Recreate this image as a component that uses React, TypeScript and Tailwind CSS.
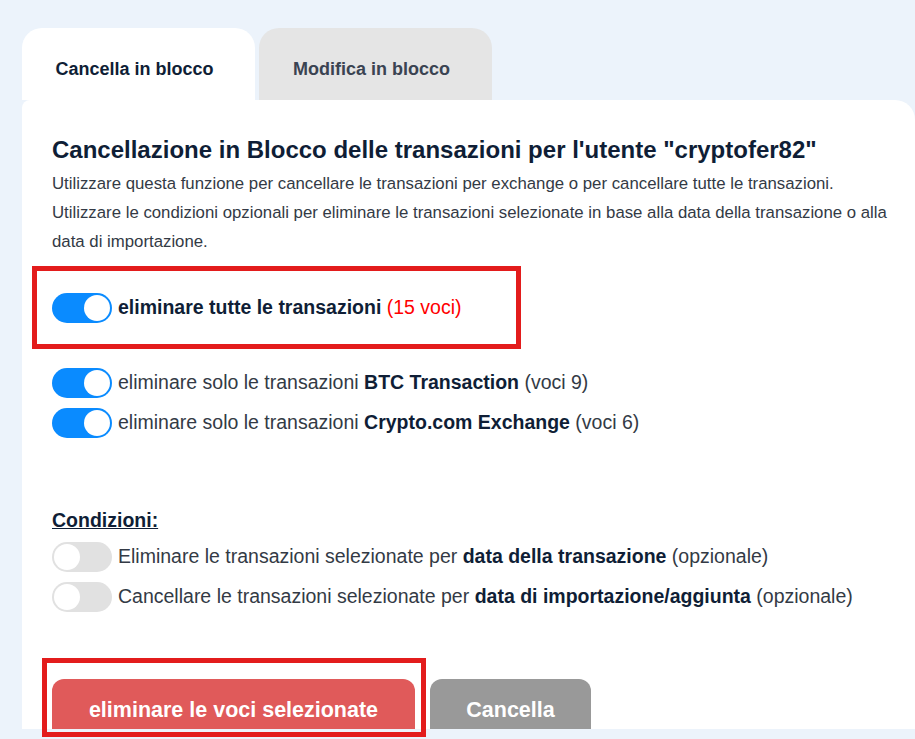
import React from "react"

function Toggle({ on }: { on: boolean }) {
  return (
    <span
      className={
        on
          ? "flex h-[30px] w-[60px] shrink-0 items-center justify-end rounded-full bg-[#0a8bff] p-[2px]"
          : "flex h-[30px] w-[60px] shrink-0 items-center justify-start rounded-full bg-[#e1e1e1] p-[2px]"
      }
    >
      <span className="h-[26px] w-[26px] rounded-full bg-white" />
    </span>
  )
}

function Row({ on, children }: { on: boolean; children: React.ReactNode }) {
  return (
    <div className="flex h-[30px] items-center gap-[6px]">
      <Toggle on={on} />
      <span className="whitespace-nowrap text-[19.5px] text-[#333a45]">{children}</span>
    </div>
  )
}

export default function App() {
  return (
    <div className="h-[739px] overflow-hidden bg-[#ecf3fb] pl-[22px] pt-[28px] font-['Liberation_Sans',Arial,sans-serif]">
      {/* Tabs */}
      <div className="flex h-[72px] gap-[4px]">
        <button className="flex w-[233px] items-center justify-center rounded-t-[20px] bg-white pr-[8px] pt-[10px] text-[18px] font-bold text-[#0f1e36]">
          Cancella in blocco
        </button>
        <button className="flex w-[233px] items-center justify-center rounded-t-[20px] bg-[#e5e5e5] pr-[8px] pt-[10px] text-[18px] font-bold text-[#3a4352]">
          Modifica in blocco
        </button>
      </div>

      {/* Panel */}
      <div className="flex h-[629px] flex-col rounded-tl-[8px] rounded-tr-[20px] bg-white pl-[30px] pr-[20px] pt-[35px]">
        <h1 className="text-[24px] font-bold leading-[30px] text-[#0f1e36]">
          Cancellazione in Blocco delle transazioni per l'utente "cryptofer82"
        </h1>
        <div className="mt-[4px] text-[16.8px] leading-[29px] text-[#333a45]">
          <p>Utilizzare questa funzione per cancellare le transazioni per exchange o per cancellare tutte le transazioni.</p>
          <p>
            Utilizzare le condizioni opzionali per eliminare le transazioni selezionate in base alla data della transazione o alla
            data di importazione.
          </p>
        </div>

        <div className="-ml-[20px] mt-[10px] flex h-[83px] w-[489px] items-center border-[5px] border-[#e31c1c] pl-[15px]">
          <Row on>
            <b className="text-[#0f1e36]">eliminare tutte le transazioni</b>{" "}
            <span className="text-[#ff0000]">(15 voci)</span>
          </Row>
        </div>

        <div className="mt-[19px] flex flex-col gap-[10px]">
          <Row on>
            eliminare solo le transazioni <b className="text-[#0f1e36]">BTC Transaction</b> (voci 9)
          </Row>
          <Row on>
            eliminare solo le transazioni <b className="text-[#0f1e36]">Crypto.com Exchange</b> (voci 6)
          </Row>
        </div>

        <div className="mt-[71px] text-[19.5px] font-bold leading-[22px] text-[#0f1e36] underline">Condizioni:</div>
        <div className="mt-[11px] flex flex-col gap-[10px]">
          <Row on={false}>
            Eliminare le transazioni selezionate per <b className="text-[#0f1e36]">data della transazione</b> (opzionale)
          </Row>
          <Row on={false}>
            Cancellare le transazioni selezionate per <b className="text-[#0f1e36]">data di importazione/aggiunta</b> (opzionale)
          </Row>
        </div>

        {/* Actions – the row runs past the panel's bottom edge */}
        <div className="mt-auto flex gap-[15px]">
          <div className="relative">
            <button className="h-[50px] w-[363px] rounded-t-[12px] bg-[#e05a5a] pt-[12px] text-[21.5px] font-bold text-white">
              eliminare le voci selezionate
            </button>
            <span className="pointer-events-none absolute -bottom-[8px] -left-[10px] -right-[11px] -top-[21px] border-[5px] border-[#e31c1c]" />
          </div>
          <button className="h-[50px] w-[161px] rounded-t-[12px] bg-[#999999] pt-[12px] text-[21.5px] font-bold text-white">
            Cancella
          </button>
        </div>
      </div>
    </div>
  )
}
